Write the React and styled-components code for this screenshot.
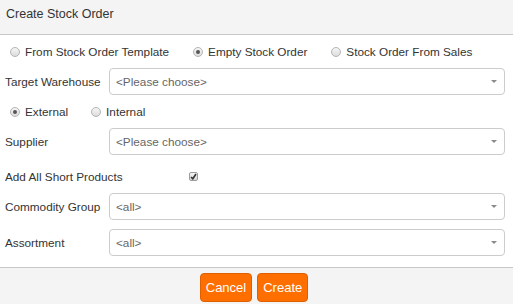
import styled, { createGlobalStyle } from 'styled-components'

const GlobalStyle = createGlobalStyle`
  html, body {
    margin: 0;
    padding: 0;
    background: #ffffff;
  }
  body {
    font-family: "Liberation Sans", Arial, sans-serif;
    color: #333;
  }
`;

const Dialog = styled.div`
  width: 513px;
  height: 304px;
  display: flex;
  flex-direction: column;
  background: #fff;
`;

const Header = styled.div`
  height: 35px;
  box-sizing: border-box;
  padding: 7px 6px 0;
  font-size: 12.5px;
  line-height: 15px;
  color: #333;
  background: #f4f4f4;
  border-bottom: 1px solid #c8c8c8;
`;

const Body = styled.div`
  flex: 1;
  display: flex;
  flex-direction: column;
  padding: 0 8px 9px 5px;
  font-size: 11.75px;
`;

const OptionRow = styled.div`
  height: ${p => p.$h || 33}px;
  display: flex;
  align-items: center;
  gap: ${p => p.$gap || 24}px;
  padding-left: 5px;
`;

const Option = styled.label`
  display: flex;
  align-items: center;
  gap: 5px;
  color: #333;
`;

const Radio = styled.span`
  width: 10px;
  height: 10px;
  box-sizing: border-box;
  border-radius: 50%;
  border: 1px solid #b4b4b4;
  background: linear-gradient(#f6f6f6, #dcdcdc);
  display: flex;
  align-items: center;
  justify-content: center;

  &::after {
    content: '';
    width: 4px;
    height: 4px;
    border-radius: 50%;
    background: ${p => (p.$checked ? '#555' : 'transparent')};
  }
`;

const FieldRow = styled.div`
  display: flex;
  align-items: center;
  margin-top: ${p => p.$mt || 0}px;
`;

const Label = styled.div`
  width: 104px;
  flex-shrink: 0;
  color: #333;
`;

const SelectBox = styled.div`
  flex: 1;
  height: 27px;
  box-sizing: border-box;
  border: 1px solid #cccccc;
  border-radius: 4px;
  background: #fff;
  display: flex;
  align-items: center;
  justify-content: space-between;
  padding: 0 7px 0 6px;
  color: #666;
`;

const Caret = styled.span`
  width: 0;
  height: 0;
  border-left: 3px solid transparent;
  border-right: 3px solid transparent;
  border-top: 3px solid #8a8a8a;
`;

const CheckRow = styled.div`
  height: 38px;
  box-sizing: border-box;
  padding-top: 4px;
  display: flex;
  align-items: center;
`;

const CheckLabel = styled.div`
  width: 184px;
  color: #333;
`;

const Checkbox = styled.span`
  width: 9px;
  height: 9px;
  box-sizing: border-box;
  border: 1px solid #9c9c9c;
  border-radius: 2px;
  background: linear-gradient(#f4f4f4, #d8d8d8);
  display: flex;
  align-items: center;
  justify-content: center;
`;

const Footer = styled.div`
  height: 37px;
  box-sizing: border-box;
  border-top: 1px solid #c8c8c8;
  background: #f4f4f4;
  display: flex;
  justify-content: center;
  align-items: flex-start;
  gap: 5px;
  padding: 5px 5px 0 0;
`;

const Button = styled.button`
  height: 29px;
  padding: 0 5px;
  background: #ff6f00;
  border: 1px solid #e06000;
  border-radius: 4px;
  color: #fff;
  font-family: "Liberation Sans", Arial, sans-serif;
  font-size: 13px;
  cursor: pointer;
`;

function Select({ value }) {
  return (
    <SelectBox>
      <span>{value}</span>
      <Caret />
    </SelectBox>
  );
}

export default function App() {
  return (
    <>
      <GlobalStyle />
      <Dialog>
        <Header>Create Stock Order</Header>
        <Body>
          <OptionRow $gap={24}>
            <Option><Radio />From Stock Order Template</Option>
            <Option><Radio $checked />Empty Stock Order</Option>
            <Option><Radio />Stock Order From Sales</Option>
          </OptionRow>
          <FieldRow>
            <Label>Target Warehouse</Label>
            <Select value="<Please choose>" />
          </FieldRow>
          <OptionRow $gap={23}>
            <Option><Radio $checked />External</Option>
            <Option><Radio />Internal</Option>
          </OptionRow>
          <FieldRow>
            <Label>Supplier</Label>
            <Select value="<Please choose>" />
          </FieldRow>
          <CheckRow>
            <CheckLabel>Add All Short Products</CheckLabel>
            <Checkbox>
              <svg width="7" height="7" viewBox="0 0 7 7">
                <path d="M1 4 L2.8 5.8 L6 1" fill="none" stroke="#333" strokeWidth="1.6" />
              </svg>
            </Checkbox>
          </CheckRow>
          <FieldRow>
            <Label>Commodity Group</Label>
            <Select value="<all>" />
          </FieldRow>
          <FieldRow $mt={9}>
            <Label>Assortment</Label>
            <Select value="<all>" />
          </FieldRow>
        </Body>
        <Footer>
          <Button>Cancel</Button>
          <Button>Create</Button>
        </Footer>
      </Dialog>
    </>
  );
}
